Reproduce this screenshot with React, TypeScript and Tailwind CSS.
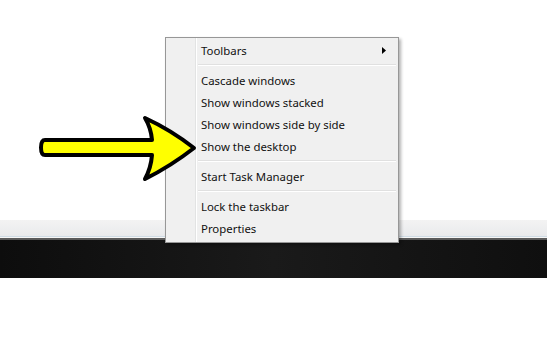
import React from "react";

function Sep() {
  return (
    <div className="h-[8px] flex items-center pl-[32px] pr-[2px]">
      <div className="w-full border-t border-[#e0e0e0] border-b border-b-white h-[2px]" />
    </div>
  );
}

function Item({ label, sub }: { label: string; sub?: boolean }) {
  return (
    <div className="h-[22px] flex items-center pl-[35px] pr-[12px] justify-between">
      <span className="pt-[2px]">{label}</span>
      {sub && (
        <svg width="4" height="7" viewBox="0 0 4 7">
          <path d="M0 0 L4 3.5 L0 7 Z" fill="#000" />
        </svg>
      )}
    </div>
  );
}

export default function App() {
  return (
    <div className="relative w-[547px] h-[364px] bg-white overflow-hidden" style={{ fontFamily: '"Noto Sans", "Open Sans", sans-serif' }}>
      <div className="h-[220px]" />
      <div className="h-[16px] bg-gradient-to-b from-[#f3f3f3] to-[#e9eaec]" />
      <div className="h-[1px] bg-[#cfdbe4]" />
      <div className="h-[1px] bg-[#f6f6f6]" />
      <div className="h-[2px] bg-[#5a5a5a]" />
      <div className="h-[38px] bg-gradient-to-r from-[#0d0d0d] via-[#1a1a1a] to-[#0f0f0f]" />

      <div className="absolute left-[165px] top-[37px] w-[234px] h-[206px] bg-[#f0f0f0] border border-[#979797] shadow-[2px_2px_3px_rgba(0,0,0,0.3)] pt-[1px] text-[11.4px] text-[#111] leading-none">
        <div className="absolute left-[29px] top-0 bottom-0 w-[2px] border-l border-[#e2e3e3] border-r border-r-white" />
        <div className="relative">
          <Item label="Toolbars" sub />
          <Sep />
          <Item label="Cascade windows" />
          <Item label="Show windows stacked" />
          <Item label="Show windows side by side" />
          <Item label="Show the desktop" />
          <Sep />
          <Item label="Start Task Manager" />
          <Sep />
          <Item label="Lock the taskbar" />
          <Item label="Properties" />
        </div>
      </div>

      <svg className="absolute left-0 top-0" width="547" height="364" viewBox="0 0 547 364">
        <path
          d="M45 140 L152 140 Q151 128 145 118 Q171 130 194 148 Q171 166 145 179 Q151 168 152 155 L45 155 Q41 155 41 147.5 Q41 140 45 140 Z"
          fill="#ffff00"
          stroke="#000"
          strokeWidth="4"
          strokeLinejoin="round"
        />
      </svg>
    </div>
  );
}
